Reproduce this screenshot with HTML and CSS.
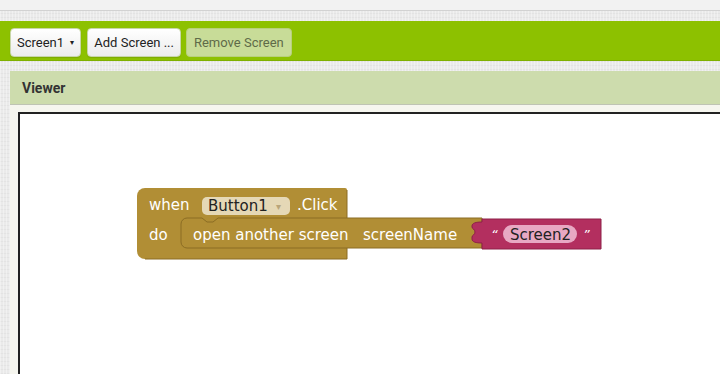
FILE: index.html
```html
<!DOCTYPE html>
<html lang="en">
<head>
    <meta charset="UTF-8">
    <title>Blocks Editor</title>
    <link rel="stylesheet" href="styles.css">
</head>
<body>
    <div class="top-strip"></div>
    <div class="gap"></div>
    <div class="toolbar">
        <button class="tb-btn">Screen1 <span class="caret">&#9662;</span></button>
        <button class="tb-btn">Add Screen ...</button>
        <button class="tb-btn disabled">Remove Screen</button>
    </div>
    <div class="gap"></div>
    <div class="viewer">
        <div class="viewer-head">Viewer</div>
        <div class="viewer-body">
            <div class="canvas">
                <svg class="blocks" width="702" height="262" viewBox="18 112 702 262">
                    <!-- when Button1.Click -->
                    <path class="gold" d="M137,196 a8,8 0 0 1 8,-8 H345 a2,2 0 0 1 2,2 V259 H145 a8,8 0 0 1 -8,-8 Z"/>
                    <path class="gold-edge" d="M145,259 H347 V190"/>
                    <text class="lbl" x="149" y="210">when</text>
                    <rect class="field-gold" x="202" y="197" width="88" height="18" rx="5"/>
                    <text class="lbl dark" x="208" y="211">Button1</text>
                    <text class="arrow" x="276" y="210">&#9662;</text>
                    <text class="lbl" x="297" y="210">.Click</text>
                    <text class="lbl" x="149" y="240">do</text>

                    <!-- open another screen -->
                    <path class="gold stmt" d="M181,224 a6,6 0 0 1 6,-6 H202 l5,4 h6 l5,-4 H482 V248 H187 a6,6 0 0 1 -6,-6 Z"/>
                    <text class="lbl" x="193" y="240">open another screen</text>
                    <text class="lbl" x="363" y="240">screenName</text>

                    <!-- text block -->
                    <path class="pink" d="M482,219 H601 V249 H482 V243 c-6,0 -10,-1 -10,-4 v-2 c0,-2 3,-2 3,-5 s-3,-3 -3,-5 v-1 c0,-3 4,-4 10,-4 Z"/>
                    <text class="quote" x="491" y="239">&#8220;</text>
                    <rect class="field-pink" x="503" y="225" width="74" height="18" rx="9"/>
                    <text class="lbl dark" x="510" y="240">Screen2</text>
                    <text class="quote" x="583" y="239">&#8221;</text>
                </svg>
            </div>
        </div>
    </div>
</body>
</html>
```
FILE: styles.css
```css
body {
    margin: 0;
    height: 374px;
    font-family: Roboto, "Liberation Sans", sans-serif;
    background-color: #eaeaea;
    background-image: repeating-linear-gradient(90deg, rgba(255,255,255,0.35) 0 1px, transparent 1px 3px),
                      repeating-linear-gradient(0deg, rgba(0,0,0,0.03) 0 1px, transparent 1px 4px);
    overflow: hidden;
}
.top-strip {
    height: 10px;
    background: #f2f2f2;
    border-bottom: 1px solid #d2d2d2;
}
.gap {
    height: 10px;
}
.toolbar {
    height: 40px;
    background: #8dc100;
    border-bottom: 1px solid #7fb000;
    display: flex;
    align-items: flex-start;
    gap: 5px;
    padding: 7px 0 0 10px;
    box-sizing: border-box;
}
.tb-btn {
    height: 29px;
    padding: 0 6px;
    font-family: Roboto, "Liberation Sans", sans-serif;
    font-size: 13px;
    color: #222;
    background: linear-gradient(#ffffff, #ececec);
    border: 1px solid #c8d6a8;
    border-radius: 4px;
    box-shadow: 0 1px 1px rgba(0,0,0,0.12);
}
.tb-btn + .tb-btn {
    margin-left: 1px;
}
.caret {
    font-size: 8px;
    margin-left: 3px;
    vertical-align: 2px;
}
.tb-btn.disabled {
    margin-left: 0;
    background: #c8dc98;
    color: #5f6b48;
    border-color: #b8d07c;
    box-shadow: none;
    padding: 0 7px;
}
.viewer {
    margin-left: 10px;
    background: #f6f6ef;
}
.viewer-head {
    height: 33px;
    background: #cddcad;
    border-bottom: 1px solid #bfc4b4;
    display: flex;
    align-items: center;
    padding-left: 12px;
    font-weight: bold;
    font-size: 14px;
    color: #333;
}
.viewer-body {
    padding: 7px 0 0 8px;
    height: 262px;
}
.canvas {
    height: 262px;
    background: #fff;
    border-top: 2px solid #222;
    border-left: 2px solid #222;
    overflow: hidden;
}
.blocks {
    display: block;
    margin: -2px 0 0 -2px;
}
.gold {
    fill: #b18e35;
}
.gold-edge {
    fill: none;
    stroke: #8b6d24;
    stroke-width: 1;
}
.stmt {
    stroke: #8b6d24;
    stroke-width: 1;
}
.pink {
    fill: #b32f5f;
    stroke: #8d2048;
    stroke-width: 1;
}
.lbl {
    font-family: "DejaVu Sans", Verdana, sans-serif;
    font-size: 15px;
    fill: #fff;
}
.lbl.dark {
    fill: #222;
}
.field-gold {
    fill: #e5d8b6;
}
.field-pink {
    fill: #e8a8c3;
}
.arrow {
    font-family: "DejaVu Sans", sans-serif;
    font-size: 10px;
    fill: #b9a57a;
}
.quote {
    font-family: "DejaVu Sans", sans-serif;
    font-size: 13px;
    font-style: italic;
    fill: #fff;
}
```
